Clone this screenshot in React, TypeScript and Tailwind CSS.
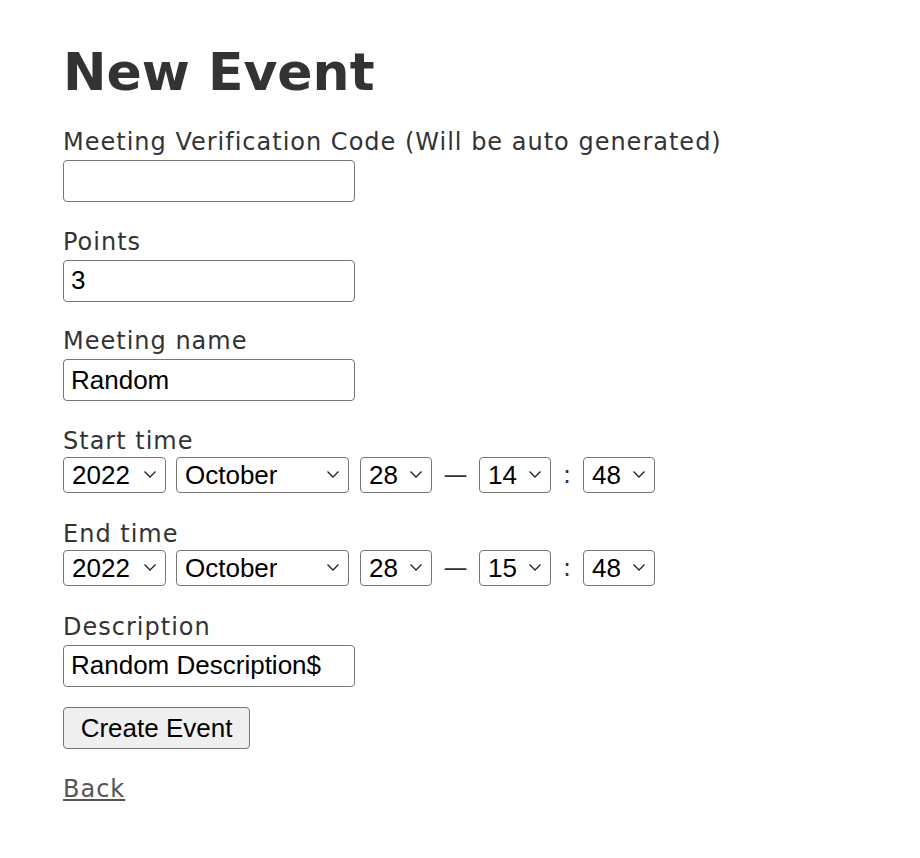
import React from 'react';

const years = ['2022'];
const months = ['October'];

const Chevron = () => (
  <svg width="14" height="9" viewBox="0 0 14 9" className="ml-2 shrink-0">
    <path d="M1.5 1.5 L7 7 L12.5 1.5" fill="none" stroke="#222" strokeWidth="1.3" />
  </svg>
);

const Select: React.FC<{ value: string; width: string }> = ({ value, width }) => (
  <div
    className={`${width} h-[36px] flex items-center justify-between border-[1.5px] border-[#767676] rounded-[4px] bg-white pl-[8px] pr-[8px] text-[26px] text-black leading-none font-['Liberation_Sans',Arial,sans-serif]`}
  >
    <span>{value}</span>
    <Chevron />
  </div>
);

const DateTimeRow: React.FC<{ hour: string }> = ({ hour }) => (
  <div className="flex items-center">
    <Select value={years[0]} width="w-[103px]" />
    <div className="w-[10px]" />
    <Select value={months[0]} width="w-[173px]" />
    <div className="w-[11px]" />
    <Select value="28" width="w-[72px]" />
    <span className="w-[47px] text-center text-[24px] text-[#333]">—</span>
    <Select value={hour} width="w-[72px]" />
    <span className="w-[32px] text-center text-[24px] text-[#333]">:</span>
    <Select value="48" width="w-[72px]" />
  </div>
);

const TextInput: React.FC<{ value: string }> = ({ value }) => (
  <input
    readOnly
    value={value}
    className="w-[292px] h-[42px] border-[1.5px] border-[#767676] rounded-[4px] px-[7px] text-[26px] text-black font-['Liberation_Sans',Arial,sans-serif] outline-none"
  />
);

const Field: React.FC<{ label: string; children: React.ReactNode }> = ({ label, children }) => (
  <div className="mb-[23.5px]">
    <label className="block text-[24px] leading-[32px] tracking-[1px] text-[#333] mb-[2px]">{label}</label>
    {children}
  </div>
);

const SelectField: React.FC<{ label: string; children: React.ReactNode }> = ({ label, children }) => (
  <div className="mb-[25px]">
    <label className="block text-[24px] leading-[32px] tracking-[1px] text-[#333]">{label}</label>
    {children}
  </div>
);

const App: React.FC = () => {
  return (
    <div className="min-h-[858px] bg-white pl-[63px] pt-[40px] font-['DejaVu_Sans',Verdana,sans-serif]">
      <h1 className="text-[52px] font-bold leading-[64px] text-[#333] mb-[22px]">New Event</h1>
      <Field label="Meeting Verification Code (Will be auto generated)">
        <TextInput value="" />
      </Field>
      <Field label="Points">
        <TextInput value="3" />
      </Field>
      <Field label="Meeting name">
        <TextInput value="Random" />
      </Field>
      <SelectField label="Start time">
        <DateTimeRow hour="14" />
      </SelectField>
      <SelectField label="End time">
        <DateTimeRow hour="15" />
      </SelectField>
      <Field label="Description">
        <TextInput value="Random Description$" />
      </Field>
      <button className="w-[187px] h-[42px] bg-[#efefef] border-[1.5px] border-[#767676] rounded-[4px] text-[26px] text-black font-['Liberation_Sans',Arial,sans-serif] -mt-[3px]">
        Create Event
      </button>
      <div className="mt-[22px]">
        <a href="#" className="text-[24px] tracking-[1px] text-[#555] underline">Back</a>
      </div>
    </div>
  );
};

export default App;
